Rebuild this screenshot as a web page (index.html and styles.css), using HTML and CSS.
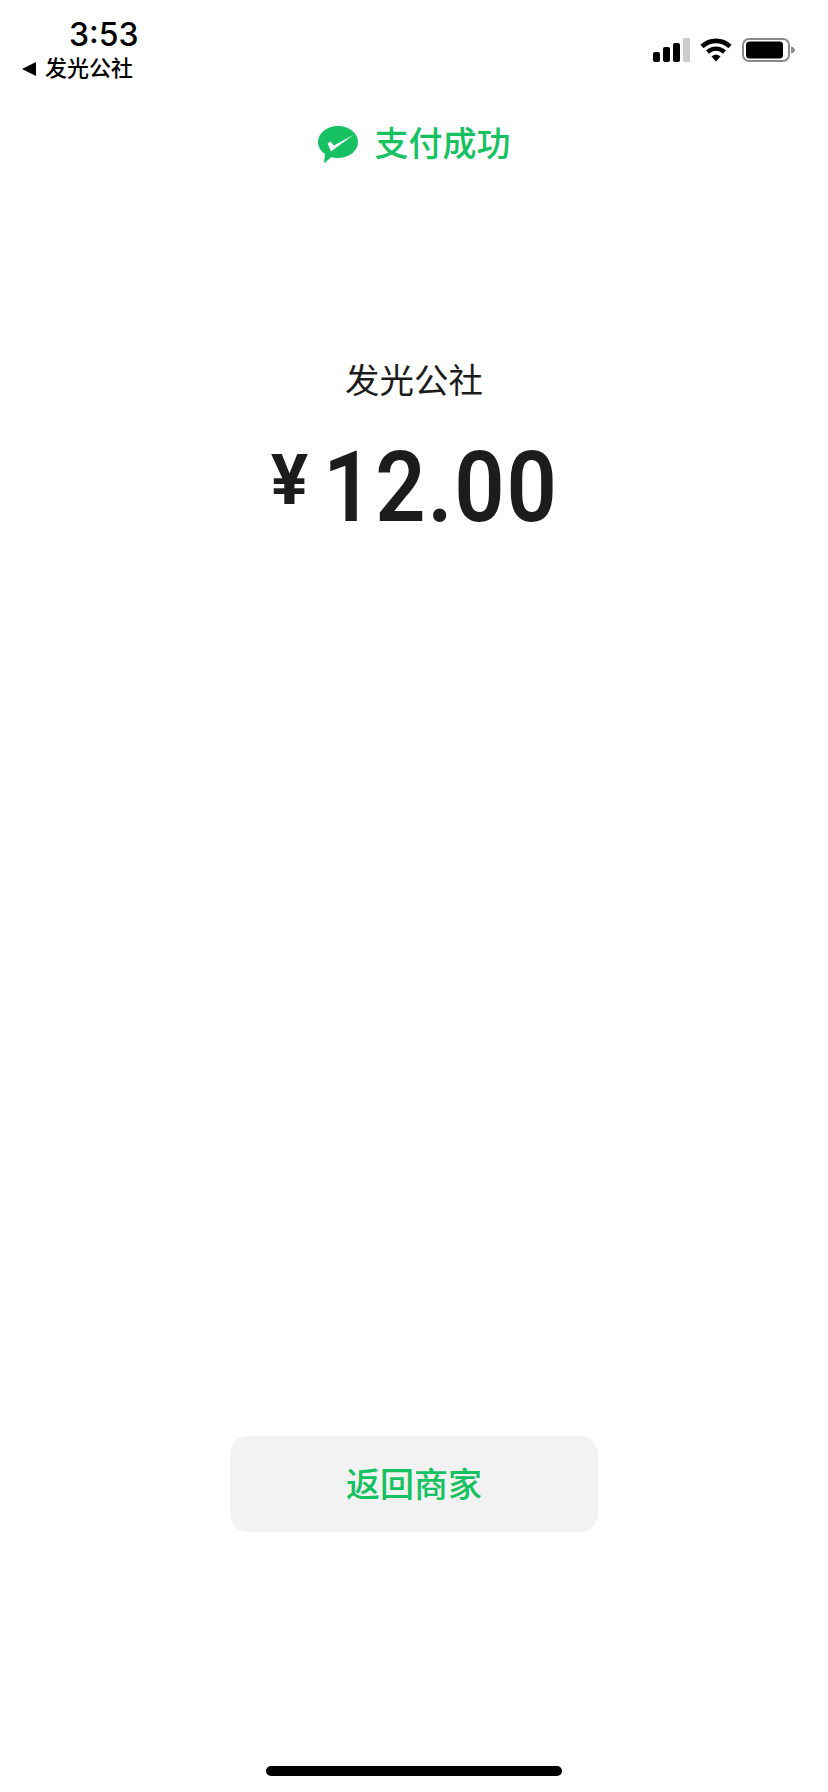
FILE: index.html
```html
<!DOCTYPE html>
<html lang="zh-CN">
<head>
    <meta charset="UTF-8">
    <meta name="viewport" content="width=device-width, initial-scale=1.0">
    <title>支付成功</title>
    <link rel="stylesheet" href="styles.css">
</head>
<body>
    <div class="status-bar">
        <div class="status-left">
            <div class="time">3:53</div>
            <div class="back-app">
                <svg class="back-arrow" width="14" height="14" viewBox="0 0 14 14"><path d="M0 7L14 0V14Z" fill="#000"/></svg>
                <span>发光公社</span>
            </div>
        </div>
        <div class="status-right">
            <svg width="37" height="24" viewBox="0 0 37 24">
                <rect x="0" y="14" width="7" height="10" rx="2" fill="#000"/>
                <rect x="10" y="9" width="7" height="15" rx="2" fill="#000"/>
                <rect x="20" y="5" width="7" height="19" rx="2" fill="#000"/>
                <rect x="30" y="0" width="7" height="24" rx="1" fill="#ccc"/>
            </svg>
            <svg width="32" height="24" viewBox="0 0 32 24">
                <path d="M2 8.5C10 1 22 1 30 8.5" fill="none" stroke="#000" stroke-width="4.8"/>
                <path d="M7.5 14C12.5 9.5 19.5 9.5 24.5 14" fill="none" stroke="#000" stroke-width="4.4"/>
                <path d="M11.5 18.6C14 16 18 16 20.5 18.6L16 23.5Z" fill="#000"/>
            </svg>
            <svg width="53" height="24" viewBox="0 0 53 24">
                <rect x="1" y="1" width="46" height="22" rx="6" fill="none" stroke="#8a8a8a" stroke-width="2"/>
                <rect x="4" y="3.5" width="37" height="17" rx="3.5" fill="#000"/>
                <path d="M49 8.5C51.5 9 53 10.5 53 12C53 13.5 51.5 15 49 15.5Z" fill="#8a8a8a"/>
            </svg>
        </div>
    </div>

    <div class="result-title">
        <svg class="wechat-icon" width="40" height="37" viewBox="0 0 40 37">
            <path d="M20 0C31 0 40 7 40 16C40 25 31 32 20 32C17.5 32 15.5 31.7 13.5 31L7 36.5C6.5 36.9 6 36.6 6.1 36L7 28C2.7 25 0 20.8 0 16C0 7 9 0 20 0Z" fill="#15c160"/>
            <path d="M9.5 17.5L12.5 15.5L16 19.5L36 8.5L13 25.5Z" fill="#fff"/>
        </svg>
        <span>支付成功</span>
    </div>

    <div class="merchant">发光公社</div>
    <div class="amount">
        <span class="currency">¥</span><span class="value">12.00</span>
    </div>

    <button class="back-button">返回商家</button>

    <div class="home-bar"></div>
</body>
</html>
```

FILE: styles.css
```css
/* 页面 */
html, body {
    height: 100%;
}

body {
    margin: 0;
    background: #fff;
    color: #1c1c1c;
    font-family: "Liberation Sans", "Noto Sans CJK SC", sans-serif;
    display: flex;
    flex-direction: column;
    align-items: center;
}

/* 状态栏 */
.status-bar {
    width: 100%;
    box-sizing: border-box;
    padding: 17px 33px 0 22px;
    display: flex;
    justify-content: space-between;
    color: #000;
}

.time {
    font-family: Inter, "Liberation Sans", sans-serif;
    font-size: 32px;
    font-weight: 550;
    line-height: 36px;
    padding-left: 47px;
}

.back-app {
    display: flex;
    align-items: center;
    gap: 9px;
    font-size: 22px;
    font-weight: 500;
    line-height: 28px;
    margin-top: 2px;
}

.status-right {
    display: flex;
    align-items: center;
    gap: 10px;
    height: 24px;
    margin-top: 21px;
}

/* 支付结果 */
.result-title {
    display: flex;
    align-items: center;
    gap: 17px;
    margin-top: 39px;
    color: #15c160;
    font-size: 34px;
    font-weight: 500;
    line-height: 44px;
}

.merchant {
    margin-top: 193px;
    font-size: 34.5px;
    line-height: 44px;
}

.amount {
    display: flex;
    align-items: flex-start;
    margin-top: 35px;
    height: 100px;
    font-family: Roboto, "Liberation Sans", sans-serif;
    font-weight: 600;
}

.currency {
    font-size: 70px;
    font-weight: 700;
    line-height: 72px;
    margin: 6px 15px 0 0;
}

.value {
    font-size: 98px;
    line-height: 100px;
    letter-spacing: 2px;
    transform: scaleX(0.9);
    transform-origin: left;
    margin-right: -28px;
}

/* 按钮 */
.back-button {
    width: 368px;
    height: 96px;
    margin-top: 898px;
    padding: 0 0 3px;
    border: none;
    border-radius: 18px;
    background: #f2f2f2;
    color: #15c160;
    font-family: inherit;
    font-size: 34px;
    font-weight: 500;
    cursor: pointer;
}

.home-bar {
    width: 296px;
    height: 10px;
    margin-top: 234px;
    border-radius: 5px;
    background: #000;
}
```
